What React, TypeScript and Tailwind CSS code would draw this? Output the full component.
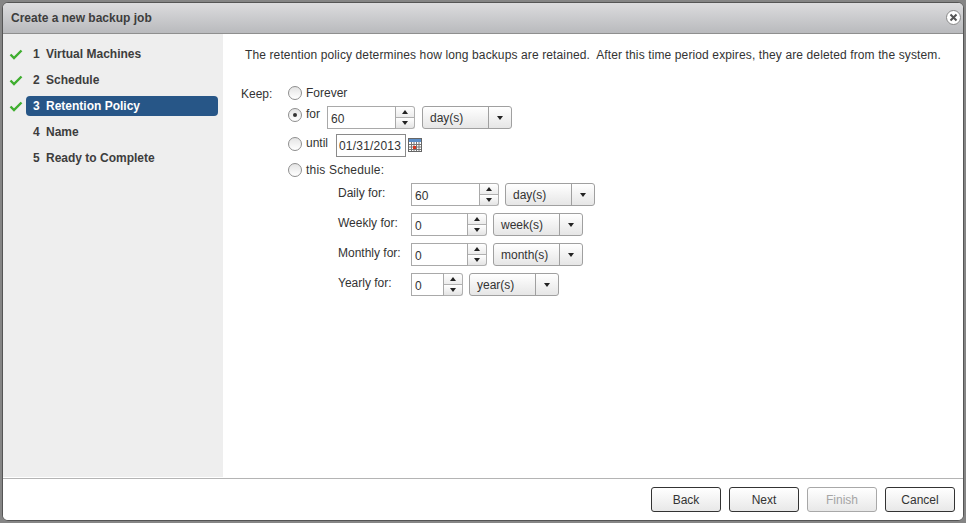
const font = { fontFamily: '"Liberation Sans", Arial, sans-serif' };

const steps = [
  { n: 1, label: "Virtual Machines", done: true },
  { n: 2, label: "Schedule", done: true },
  { n: 3, label: "Retention Policy", done: true, active: true },
  { n: 4, label: "Name" },
  { n: 5, label: "Ready to Complete" },
];

const schedule = [
  { label: "Daily for:", value: "60", unit: "day(s)", inputW: "w-[88px]" },
  { label: "Weekly for:", value: "0", unit: "week(s)", inputW: "w-[76px]" },
  { label: "Monthly for:", value: "0", unit: "month(s)", inputW: "w-[76px]" },
  { label: "Yearly for:", value: "0", unit: "year(s)", inputW: "w-[52px]" },
];

function Check() {
  return (
    <svg width="14" height="11" viewBox="0 0 14 11" className="shrink-0">
      <path d="M1.5 5.5 L5 9 L12.5 1.5" fill="none" stroke="#3fae2f" strokeWidth="2.4" />
    </svg>
  );
}

function Radio({ checked }: { checked?: boolean }) {
  return (
    <span className="flex h-[14px] w-[14px] shrink-0 items-center justify-center rounded-full border border-[#8e8e8e] bg-gradient-to-b from-[#e4e4e4] to-white">
      {checked && <span className="h-[4px] w-[4px] rounded-full bg-[#333]" />}
    </span>
  );
}

function Spinner({ value, width }: { value: string; width: string }) {
  return (
    <div className={`flex h-[23px] shrink-0 ${width}`}>
      <div className="flex flex-1 items-center border border-[#a9a9a9] bg-white pl-[3px] pt-[3px] text-[12px] text-[#333]">
        {value}
      </div>
      <div className="flex w-[19px] flex-col">
        <div className="flex h-[12px] items-center justify-center rounded-tr-[3px] border border-l-0 border-[#b0b0b0] bg-gradient-to-b from-white to-[#ececec]">
          <span className="h-0 w-0 border-x-[3.5px] border-b-[4px] border-x-transparent border-b-[#222]" />
        </div>
        <div className="flex h-[11px] items-center justify-center rounded-br-[3px] border border-l-0 border-t-0 border-[#b0b0b0] bg-gradient-to-b from-white to-[#e4e4e4]">
          <span className="h-0 w-0 border-x-[3.5px] border-t-[4px] border-x-transparent border-t-[#222]" />
        </div>
      </div>
    </div>
  );
}

function Select({ text }: { text: string }) {
  return (
    <div className="ml-[6px] flex h-[23px] w-[90px] shrink-0 items-center rounded-[3px] border border-[#a0a0a0] bg-gradient-to-b from-white to-[#e6e6e6] text-[12px] text-[#333]">
      <span className="flex-1 pl-[7px]">{text}</span>
      <span className="flex h-[21px] w-[23px] items-center justify-center border-l border-[#a0a0a0]">
        <span className="h-0 w-0 border-x-[3.5px] border-t-[4px] border-x-transparent border-t-[#222]" />
      </span>
    </div>
  );
}

function CalendarIcon() {
  return (
    <svg width="14" height="14" viewBox="0 0 14 14" className="shrink-0">
      <rect x="0.5" y="0.5" width="13" height="13" fill="#fff" stroke="#666" />
      <rect x="1" y="1" width="12" height="3" fill="#5c8fc9" />
      <path d="M1 6.5H13M1 9H13M1 11.5H13M3.5 4V13M6 4V13M8.5 4V13M11 4V13" stroke="#777" strokeWidth="1" />
      <rect x="5" y="8" width="3" height="3" fill="#d9361e" />
    </svg>
  );
}

function FooterButton({ label, disabled }: { label: string; disabled?: boolean }) {
  return (
    <div
      className={`flex h-[25px] w-[70px] items-center justify-center rounded-[3px] border bg-gradient-to-b from-white to-[#e8e8e8] text-[12px] ${
        disabled ? "border-[#a8a8a8] text-[#a5a5a5]" : "border-[#333] text-[#333]"
      }`}
    >
      {label}
    </div>
  );
}

export default function App() {
  return (
    <div className="h-[523px] w-[966px] overflow-hidden bg-[#858585] p-[2px]" style={font}>
      <div className="flex h-[519px] w-[962px] flex-col overflow-hidden rounded-[6px] border border-[#555] bg-white">
        {/* Title bar */}
        <div className="flex h-[31px] shrink-0 items-center justify-between border-b border-[#8f8f8f] bg-gradient-to-b from-[#dcdcde] to-[#b9babd] pl-[8px] pr-[2px]">
          <span className="text-[12px] font-bold text-[#3d3d3d]">Create a new backup job</span>
          <span className="-mt-[1px] flex h-[15px] w-[15px] items-center justify-center rounded-full border border-[#888] bg-white">
            <svg width="9" height="9" viewBox="0 0 9 9">
              <path d="M1.5 1.5L7.5 7.5M7.5 1.5L1.5 7.5" stroke="#555" strokeWidth="2" />
            </svg>
          </span>
        </div>

        <div className="flex min-h-0 flex-1 pb-[1px]">
          {/* Steps */}
          <div className="flex w-[220px] shrink-0 flex-col gap-[6px] bg-[#eeeeee] pl-[6px] pr-[5px] pt-[10px]">
            {steps.map((s) => (
              <div key={s.n} className="flex h-[20px] items-center">
                <span className="flex w-[17px] shrink-0 items-center">{s.done && <Check />}</span>
                <div
                  className={`flex h-[20px] flex-1 items-center rounded-[4px] pl-[7px] text-[12px] font-bold ${
                    s.active ? "bg-[#275687] text-white" : "text-[#3d3d3d]"
                  }`}
                >
                  <span className="w-[13px]">{s.n}</span>
                  {s.label}
                </div>
              </div>
            ))}
          </div>

          {/* Content */}
          <div className="min-w-0 flex-1 pl-[22px] pt-[14px] text-[12px] text-[#333]">
            <p className="whitespace-nowrap leading-[15px] tracking-[0.12px]">
              The retention policy determines how long backups are retained.&nbsp; After this time period expires, they are deleted from the system.
            </p>
            <div className="-ml-[4px] mt-[23px] flex">
              <span className="w-[47px] shrink-0 pt-[1px] leading-[15px]">Keep:</span>
              <div className="flex flex-col">
                <label className="flex h-[14px] items-center gap-[4px]">
                  <Radio />
                  <span>Forever</span>
                </label>
                <div className="mt-[6px] flex h-[24px] items-start">
                  <label className="mt-[1px] flex w-[39px] items-center gap-[4px]">
                    <Radio checked />
                    <span className="-mt-[2px]">for</span>
                  </label>
                  <div className="flex">
                    <Spinner value="60" width="w-[88px]" />
                    <div className="w-[1px]" />
                    <Select text="day(s)" />
                  </div>
                </div>
                <div className="mt-[4px] flex h-[24px] items-start">
                  <label className="mt-[1px] flex w-[48px] items-center gap-[4px]">
                    <Radio />
                    <span className="-mt-[1px]">until</span>
                  </label>
                  <div className="flex h-[23px] w-[70px] items-center border border-[#8a8a8a] pl-[2px] pt-[1px] tracking-[0.2px]">01/31/2013</div>
                  <div className="ml-[2px] mt-[4px]">
                    <CalendarIcon />
                  </div>
                </div>
                <label className="mt-[5px] flex h-[14px] items-center gap-[4px]">
                  <Radio />
                  <span className="tracking-[0.2px]">this Schedule:</span>
                </label>
                <div className="ml-[50px] mt-[6px] flex flex-col gap-[7px]">
                  {schedule.map((r) => (
                    <div key={r.label} className="flex h-[23px] items-start">
                      <span className="mt-[3px] w-[73px] shrink-0 leading-[15px]">{r.label}</span>
                      <Spinner value={r.value} width={r.inputW} />
                      <Select text={r.unit} />
                    </div>
                  ))}
                </div>
              </div>
            </div>
          </div>
        </div>

        {/* Footer */}
        <div className="flex h-[42px] shrink-0 items-center justify-end gap-[8px] border-t border-[#b4b4b4] bg-white pr-[8px]">
          <FooterButton label="Back" />
          <FooterButton label="Next" />
          <FooterButton label="Finish" disabled />
          <FooterButton label="Cancel" />
        </div>
      </div>
    </div>
  );
}
